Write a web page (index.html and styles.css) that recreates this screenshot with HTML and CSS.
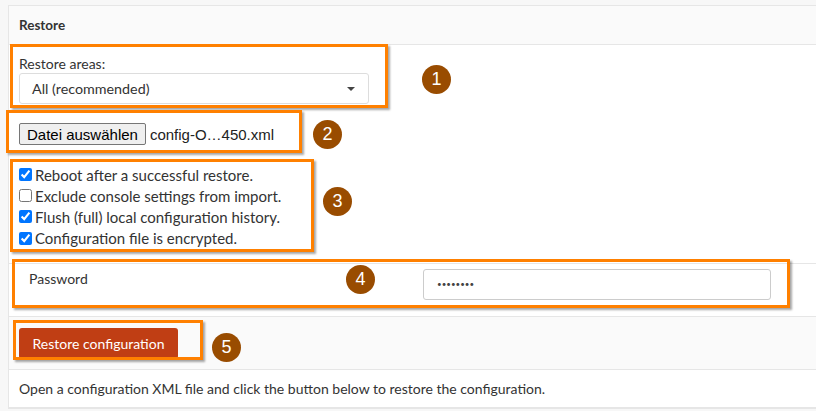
FILE: index.html
```html
<!DOCTYPE html>
<html>
<head>
<meta charset="utf-8">
<link rel="stylesheet" href="styles.css">
</head>
<body>
<div class="page">
  <section class="panel">
    <header class="panel-head">Restore</header>
    <div class="row main-row">
      <label class="field-label">Restore areas:</label>
      <div class="select">
        <span>All (recommended)</span>
        <span class="caret"></span>
      </div>
      <div class="file-row">
        <button class="file-btn">Datei auswählen</button>
        <span class="file-name">config-O…450.xml</span>
      </div>
      <ul class="checks">
        <li><input type="checkbox" checked><span>Reboot after a successful restore.</span></li>
        <li><input type="checkbox"><span>Exclude console settings from import.</span></li>
        <li><input type="checkbox" checked><span>Flush (full) local configuration history.</span></li>
        <li><input type="checkbox" checked><span>Configuration file is encrypted.</span></li>
      </ul>
    </div>
    <div class="row pw-row">
      <div class="pw-label">Password</div>
      <div class="pw-input">••••••••</div>
    </div>
    <div class="row btn-row">
      <button class="primary">Restore configuration</button>
    </div>
    <div class="row note-row">Open a configuration XML file and click the button below to restore the configuration.</div>
  </section>

  <div class="mark box1"></div>
  <div class="mark box2"></div>
  <div class="mark box3"></div>
  <div class="mark box4"></div>
  <div class="mark box5"></div>
  <div class="badge b1">1</div>
  <div class="badge b2">2</div>
  <div class="badge b3">3</div>
  <div class="badge b4">4</div>
  <div class="badge b5">5</div>
</div>
</body>
</html>
```
FILE: styles.css
```css
html, body {
  margin: 0;
  padding: 0;
  background: #f7f7f7;
  overflow: hidden;
}
.page {
  position: relative;
  width: 816px;
  height: 411px;
  padding-top: 5px;
  box-sizing: border-box;
  font-family: Lato, "Liberation Sans", sans-serif;
  color: #333;
}
.panel {
  margin-left: 8px;
  width: 830px;
  background: #fff;
  border: 1px solid #e6e6e6;
  border-right: none;
}
.panel-head {
  height: 38px;
  line-height: 38px;
  padding-left: 10px;
  background: #fafafa;
  border-bottom: 1px solid #e6e6e6;
  font-weight: bold;
  font-size: 13.5px;
  color: #333;
}
.row {
  padding-left: 10px;
}
.main-row {
  padding-top: 10px;
  height: 219px;
  border-bottom: 1px solid #e6e6e6;
  box-sizing: border-box;
}
.field-label {
  display: block;
  font-size: 14px;
  line-height: 18px;
  height: 18px;
}
.select {
  width: 323px;
  height: 29px;
  border: 1px solid #ddd;
  border-radius: 3px;
  display: flex;
  align-items: center;
  justify-content: space-between;
  padding: 0 13px 0 12px;
  font-size: 14.3px;
}
.caret {
  width: 0;
  height: 0;
  border-left: 4px solid transparent;
  border-right: 4px solid transparent;
  border-top: 4px solid #444;
}
.file-row {
  margin-top: 19px;
  display: flex;
  align-items: center;
  gap: 4px;
  font-family: "Liberation Sans", Arial, sans-serif;
  font-size: 15px;
}
.file-btn {
  font-family: "Liberation Sans", Arial, sans-serif;
  font-size: 15px;
  height: 22px;
  padding: 0 7px;
  border: 1px solid #767676;
  border-radius: 2px;
  background: #efefef;
  color: #000;
}
.file-name { color: #222; }
.checks {
  list-style: none;
  margin: 19px 0 0;
  padding: 0;
  font-size: 15px;
}
.checks li {
  display: flex;
  align-items: center;
  height: 21.2px;
}
.checks input {
  margin: 0 3px 0 0;
  width: 13px;
  height: 13px;
}
.pw-row {
  display: flex;
  height: 52px;
  border-bottom: 1px solid #e6e6e6;
  padding-left: 20px;
}
.pw-label {
  width: 394px;
  font-size: 14px;
  padding-top: 6px;
}
.pw-input {
  margin-top: 5px;
  width: 333px;
  height: 29px;
  border: 1px solid #ccc;
  border-radius: 3px;
  padding-left: 13px;
  line-height: 29px;
  font-size: 8px;
  color: #444;
}
.btn-row {
  height: 52px;
  background: #fafafa;
  border-bottom: 1px solid #e6e6e6;
  display: flex;
  align-items: center;
}
.primary {
  width: 159px;
  height: 31px;
  border: none;
  border-radius: 3px;
  background: #c03e14;
  color: #fff;
  font-family: Lato, "Liberation Sans", sans-serif;
  font-size: 14px;
  padding: 0;
}
.note-row {
  height: 37px;
  line-height: 37px;
  font-size: 14px;
  border-bottom: 1px solid #e6e6e6;
}
.mark {
  position: absolute;
  border: 3px solid #ff8000;
  box-shadow: 2px 2px 2px rgba(0,0,0,0.35);
  box-sizing: border-box;
}
.box1 { left: 10px; top: 44px; width: 378px; height: 64px; }
.box2 { left: 6px; top: 110px; width: 296px; height: 43px; }
.box3 { left: 10px; top: 159px; width: 304px; height: 93px; }
.box4 { left: 12px; top: 259px; width: 778px; height: 49px; }
.box5 { left: 13px; top: 320px; width: 190px; height: 40px; }
.badge {
  position: absolute;
  width: 29px;
  height: 29px;
  border-radius: 50%;
  background: #994c00;
  color: #fff;
  font-family: "Liberation Sans", Arial, sans-serif;
  font-size: 18px;
  line-height: 29px;
  text-align: center;
}
.b1 { left: 422px; top: 65px; }
.b2 { left: 313px; top: 120px; }
.b3 { left: 323px; top: 187px; }
.b4 { left: 346px; top: 265px; }
.b5 { left: 212px; top: 333px; }
```
